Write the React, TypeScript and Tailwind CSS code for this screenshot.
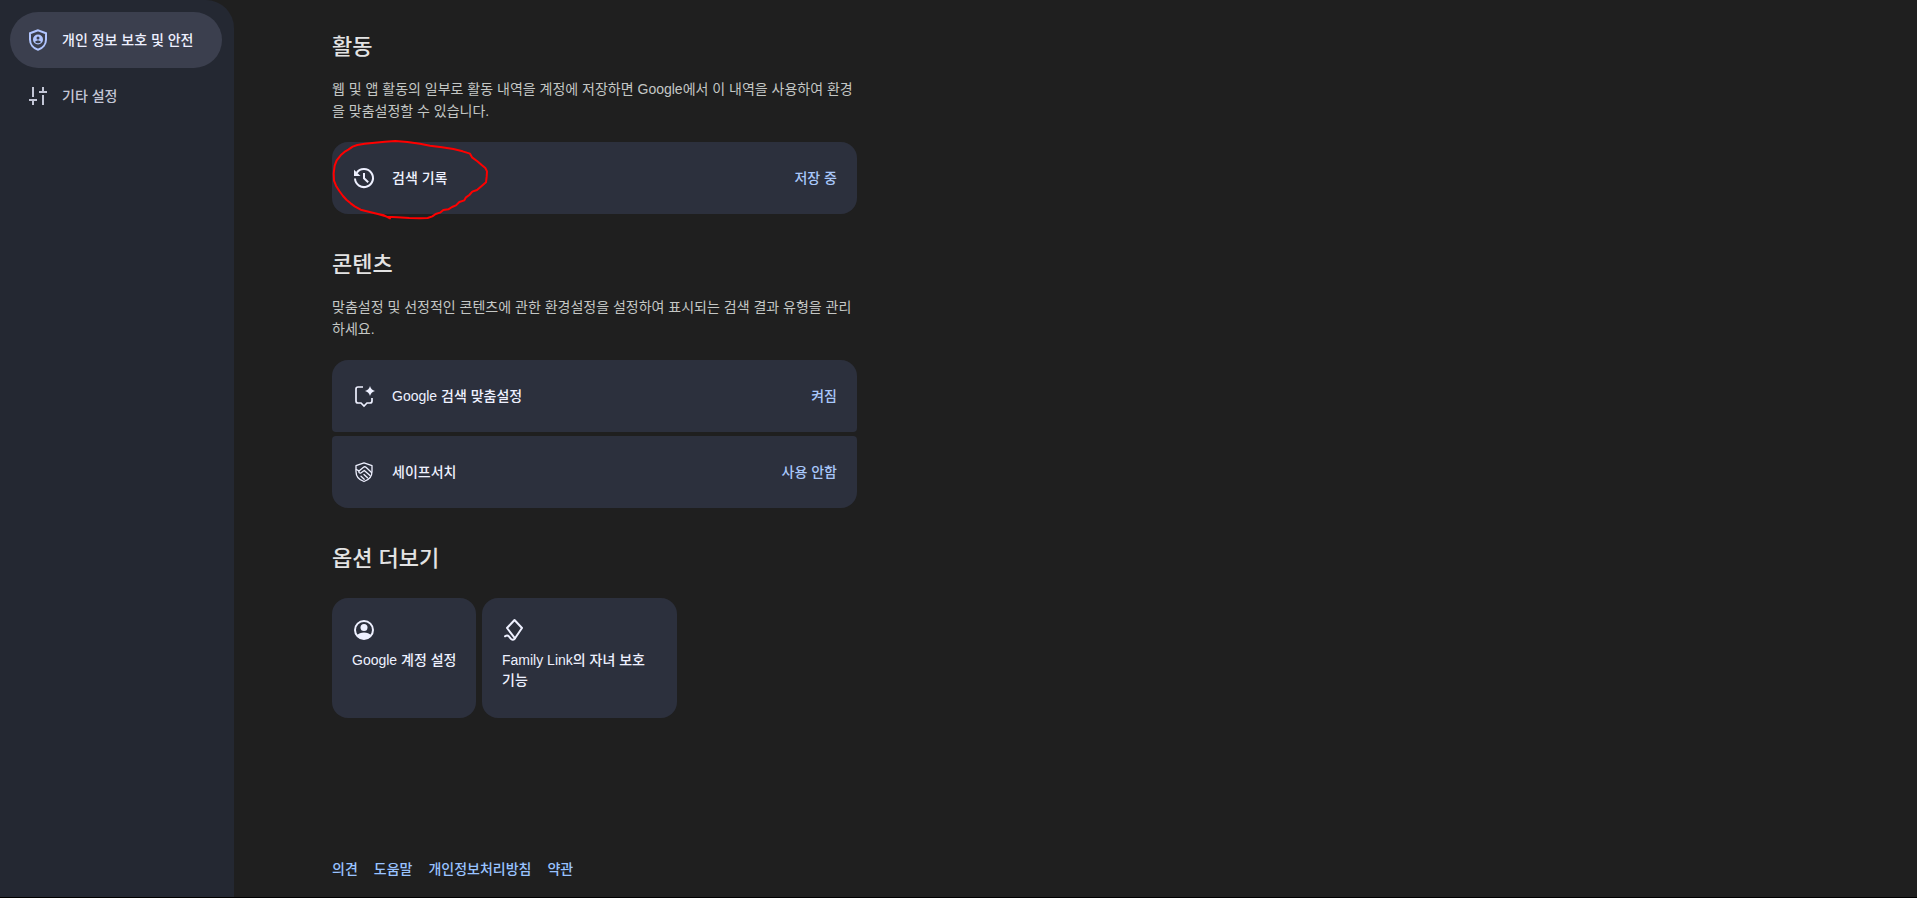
import type { ReactNode } from 'react';
import clsx from 'clsx';

type IconProps = { className?: string };

function Svg({ className, children }: IconProps & { children: ReactNode }) {
  return (
    <svg
      viewBox="0 0 24 24"
      aria-hidden="true"
      fill="none"
      stroke="currentColor"
      strokeWidth="2"
      className={clsx('size-6 shrink-0', className)}
    >
      {children}
    </svg>
  );
}

function ShieldPersonIcon({ className }: IconProps) {
  return (
    <Svg className={className}>
      <path d="M12 2.2 4 5.2v6.3c0 4.9 3.3 8.9 8 10.3 4.7-1.4 8-5.4 8-10.3V5.2z" />
      <circle cx="12" cy="11.5" r="5" fill="currentColor" stroke="none" />
      <circle cx="12" cy="9.9" r="1.5" fill="#3b3f4e" stroke="none" />
      <path d="M9 14c.7-1 1.8-1.5 3-1.5s2.3.5 3 1.5a4 4 0 0 1-6 0z" fill="#3b3f4e" stroke="none" />
    </Svg>
  );
}

function SlidersIcon({ className }: IconProps) {
  return (
    <Svg className={className}>
      <path d="M7 3v10M3 16h8M7 16v5M17 3v5M13 8h8M17 11v10" />
    </Svg>
  );
}

function HistoryIcon({ className }: IconProps) {
  return (
    <Svg className={className}>
      <path d="M4.7 6.8A9 9 0 1 1 3 12.5" />
      <path d="M2 3.8l6.5 6.2H2z" fill="currentColor" stroke="none" />
      <path d="M12 7v5.2l4.2 4" />
    </Svg>
  );
}

function PersonalizeIcon({ className }: IconProps) {
  return (
    <Svg className={className}>
      <path d="M11 3H6Q4 3 4 5v12q0 2 2 2h3l3 3 3-3h3q2 0 2-2v-3" strokeWidth="1.7" />
      <path
        d="M18 2q1 4 5 5-4 1-5 5-1-4-5-5 4-1 5-5z"
        fill="currentColor"
        stroke="none"
      />
    </Svg>
  );
}

function SafeSearchIcon({ className }: IconProps) {
  return (
    <Svg className={className}>
      <g strokeWidth="1.3" strokeLinejoin="round" strokeLinecap="round">
        <path d="M12 2.8 4 5.6v5.9c0 4.8 3.2 8.5 8 10 4.8-1.5 8-5.2 8-10V5.6z" />
        <path d="M4.3 9.5 7 10.9l4.5-3.700q1.300-1 2.500.1l5.500 5.200" />
        <path d="M7 10.900c-.8 1.700.8 2.900 2.200 1.800l3.100-2.300 5.700 5.200" />
        <path d="M12 14.500l3.500 3.300M9 16.300l3.200 3" />
      </g>
    </Svg>
  );
}

function AccountIcon({ className }: IconProps) {
  return (
    <Svg className={className}>
      <circle cx="12" cy="12" r="9" />
      <circle cx="12" cy="9.5" r="3.5" fill="currentColor" stroke="none" />
      <path d="M4.5 17.5c2-2 4.6-3 7.5-3s5.5 1 7.5 3A9 9 0 0 1 12 21a9 9 0 0 1-7.5-3.5z" fill="currentColor" stroke="none" />
    </Svg>
  );
}

function KiteIcon({ className }: IconProps) {
  return (
    <Svg className={className}>
      <g strokeLinejoin="round" strokeLinecap="round">
        <path d="M12.5 2l7.5 8-7 10.300L5 10z" />
        <path d="M3 18.300c1.500-1 3-.9 4 .2l1.700 2.200c1.300 1.600 3.100 1.300 4.300-.4" />
      </g>
    </Svg>
  );
}

const navItems = [
  { label: '개인 정보 보호 및 안전', Icon: ShieldPersonIcon, active: true },
  { label: '기타 설정', Icon: SlidersIcon, active: false },
];

const footerLinks = ['의견', '도움말', '개인정보처리방침', '약관'];

function Heading({ children }: { children: ReactNode }) {
  return <h2 className="text-[22px] leading-[30px] font-medium text-[#e3e3e3]">{children}</h2>;
}

function Description({ children }: { children: ReactNode }) {
  return <p className="mt-4 text-sm leading-[22px] text-[#c4c7c5]">{children}</p>;
}

type RowProps = {
  label: string;
  status: string;
  Icon: (props: IconProps) => ReactNode;
  className?: string;
};

function SettingRow({ label, status, Icon, className }: RowProps) {
  return (
    <a href="#" className={clsx('flex h-18 items-center gap-4 bg-[#2c303d] px-5 text-sm font-medium', className)}>
      <Icon className="text-[#eef0ff]" />
      <span className="flex-1 text-[#eef0ff]">{label}</span>
      <span className="text-[#a8c7fa]">{status}</span>
    </a>
  );
}

// Hand-drawn red loop round the search history entry
function Scribble() {
  return (
    <svg
      viewBox="0 0 540 300"
      aria-hidden="true"
      fill="none"
      stroke="#ff0000"
      strokeWidth="6"
      strokeLinecap="round"
      strokeLinejoin="round"
      className="pointer-events-none absolute -top-3 -left-3 h-[100px] w-[180px]"
    >
      <path d="M210 265 192 256 174 252 146 245 122 239 104 229 92 220 80 210 69 198 58 183 48 167 42 152 41 130 44 107 50 91 62 76 76 64 85 59 98 50 112 45 134 41 164 38 195 35 226 33 262 36 300 41 330 47 366 52 400 57 428 64 450 71 456 82 471 93 486 106 496 114 501 124 500 140 498 157 485 168 471 180 457 185 448 195 438 202 433 211 418 216 408 226 396 231 385 238 370 240 360 248 347 252 337 259 323 264 300 265 268 264 232 262 200 260 174 252" />
    </svg>
  );
}

export default function App() {
  return (
    <div
      lang="ko"
      className="flex min-h-screen border-b border-black bg-[#1f1f1f] font-['Liberation_Sans','Noto_Sans_CJK_KR',sans-serif]"
    >
      <nav className="w-[234px] shrink-0 rounded-tr-[28px] bg-[#242832] pt-3 pr-3 pl-[10px]">
        {navItems.map(({ label, Icon, active }) => (
          <a
            key={label}
            href="#"
            aria-current={active ? 'page' : undefined}
            className={clsx(
              'flex h-14 items-center gap-3 rounded-full px-4 text-sm font-medium',
              active ? 'bg-[#3b3f4e] text-[#eef0ff]' : 'text-[#c3c6d6]'
            )}
          >
            <Icon className={active ? 'text-[#b1c5ff]' : undefined} />
            {label}
          </a>
        ))}
      </nav>

      <div className="flex min-w-0 flex-1 flex-col pr-6 pl-[98px]">
        <main className="flex max-w-[525px] flex-col gap-9 pt-8 pb-12">
          <section>
            <Heading>활동</Heading>
            <Description>
              웹 및 앱 활동의 일부로 활동 내역을 계정에 저장하면 Google에서 이 내역을 사용하여 환경을 맞춤설정할 수 있습니다.
            </Description>
            <div className="relative mt-5">
              <SettingRow label="검색 기록" status="저장 중" Icon={HistoryIcon} className="rounded-2xl" />
              <Scribble />
            </div>
          </section>

          <section>
            <Heading>콘텐츠</Heading>
            <Description>
              맞춤설정 및 선정적인 콘텐츠에 관한 환경설정을 설정하여 표시되는 검색 결과 유형을 관리하세요.
            </Description>
            <div className="mt-5 flex flex-col gap-1">
              <SettingRow
                label="Google 검색 맞춤설정"
                status="켜짐"
                Icon={PersonalizeIcon}
                className="rounded-t-2xl rounded-b-sm"
              />
              <SettingRow label="세이프서치" status="사용 안함" Icon={SafeSearchIcon} className="rounded-t-sm rounded-b-2xl" />
            </div>
          </section>

          <section>
            <Heading>옵션 더보기</Heading>
            <div className="mt-6 flex gap-[6px] text-sm leading-5 font-medium text-[#eef0ff]">
              <a href="#" className="flex h-30 w-36 flex-col gap-2 rounded-2xl bg-[#2c303d] py-5 pl-5">
                <AccountIcon />
                Google 계정 설정
              </a>
              <a href="#" className="flex h-30 w-[195px] flex-col gap-2 rounded-2xl bg-[#2c303d] p-5">
                <KiteIcon />
                Family Link의 자녀 보호 기능
              </a>
            </div>
          </section>
        </main>

        <footer className="mt-auto flex gap-4 pb-[18px] text-sm leading-5 font-medium text-[#99c3ff]">
          {footerLinks.map((label) => (
            <a key={label} href="#">
              {label}
            </a>
          ))}
        </footer>
      </div>
    </div>
  );
}
